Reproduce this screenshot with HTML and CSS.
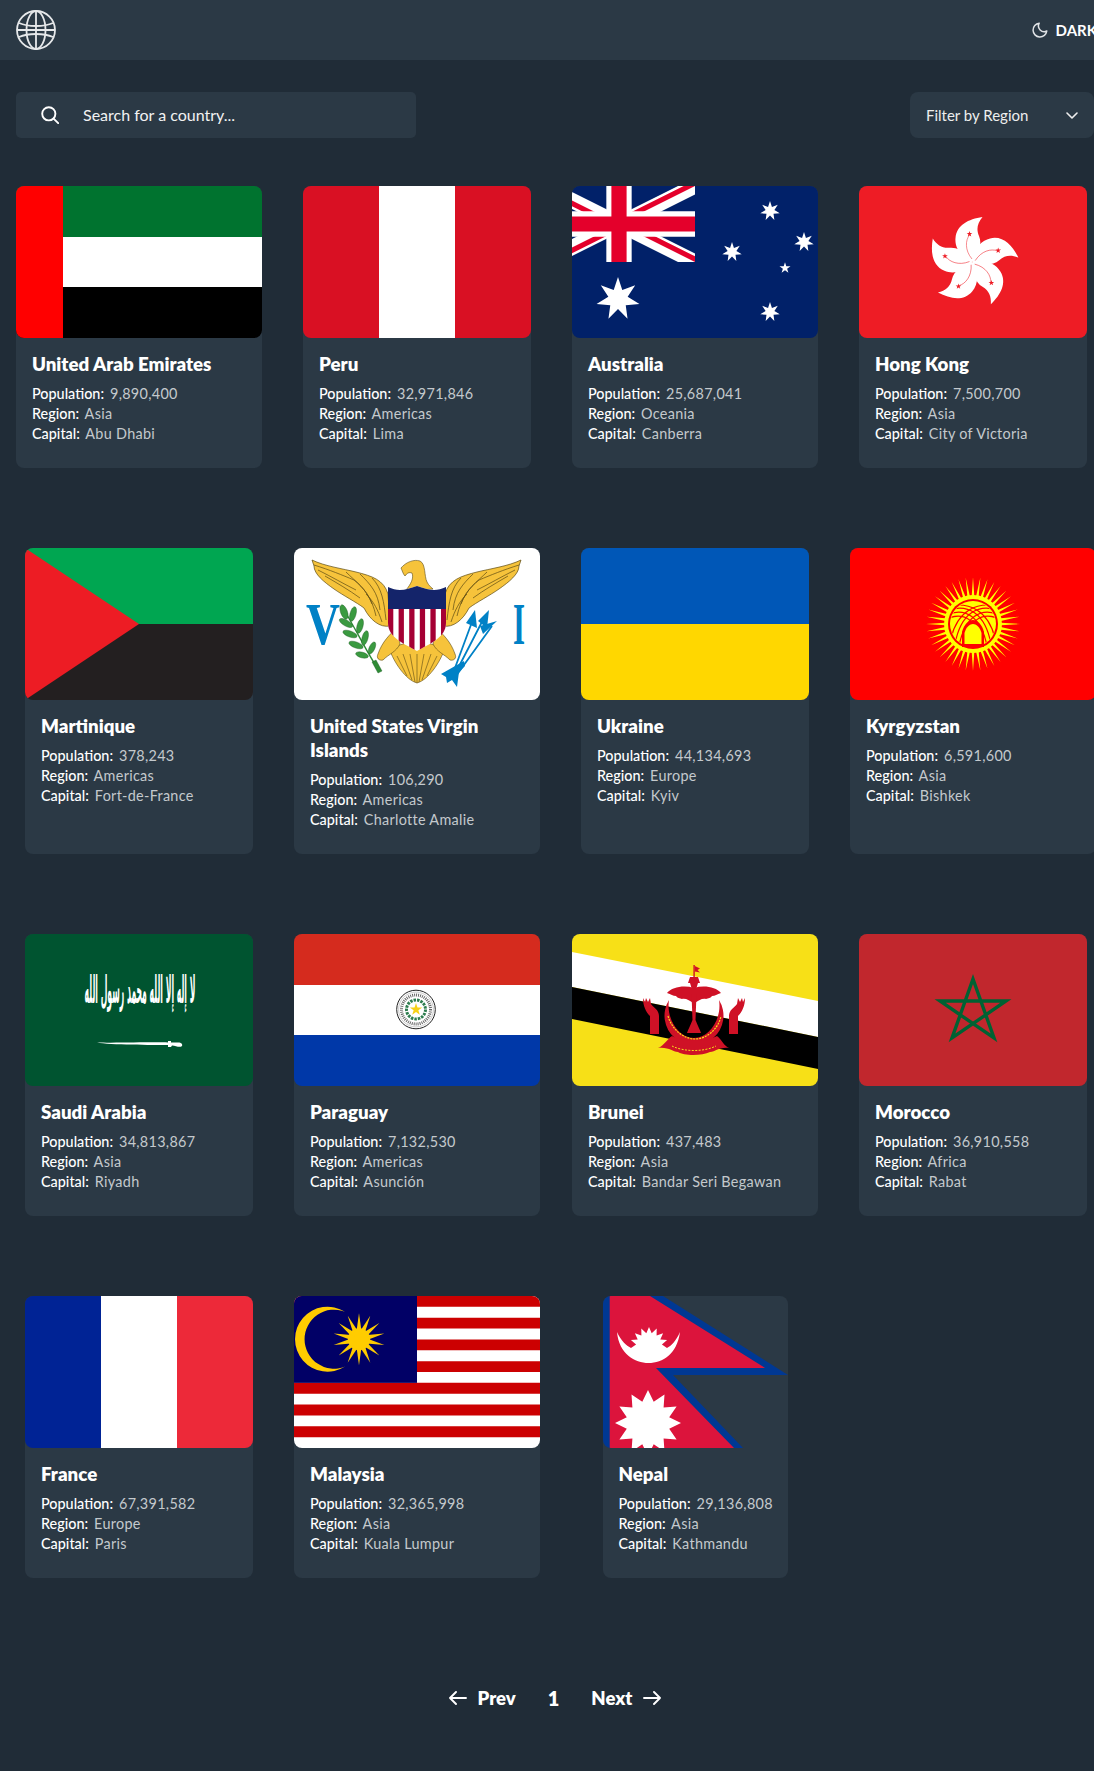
FILE: index.html
```html
<!DOCTYPE html>
<html lang="en">
<head>
<meta charset="utf-8">
<title>Where in the world?</title>
<link rel="stylesheet" href="styles.css">
</head>
<body>
<svg class="sprite" aria-hidden="true" viewBox="0 0 1 1">
  <defs>
    <polygon id="star5" points="0,-100 22.5,-31 95,-31 36.4,11.8 58.8,81 0,38 -58.8,81 -36.4,11.8 -95,-31 -22.5,-31"/>
    <polygon id="star7" points="0,-100 19.5,-40.5 78.2,-62.3 43.9,-10 97.5,22.3 35.2,28.1 43.4,90.1 0,45 -43.4,90.1 -35.2,28.1 -97.5,22.3 -43.9,-10 -78.2,-62.3 -19.5,-40.5"/>
  </defs>
</svg>

<header class="topbar">
  <svg class="logo" viewBox="0 0 40 40" fill="none" stroke="currentColor" stroke-width="1.8" aria-label="Globe">
    <circle cx="20" cy="20" r="19"/>
    <ellipse cx="20" cy="20" rx="9.5" ry="19"/>
    <path d="M3 13C12 17 28 17 37 13M3 27C12 23 28 23 37 27"/>
    <path d="M20 1v38M1 20h38"/>
  </svg>
  <button class="mode-toggle" type="button">
    <svg class="moon" viewBox="0 0 16 16" fill="none" stroke="currentColor" stroke-width="1.5" stroke-linejoin="round"><path d="M7.2 1.2A6.9 6.9 0 1 0 14.8 9 5.7 5.7 0 0 1 7.2 1.2Z"/></svg>
    <span>DARK</span>
  </button>
</header>

<main class="content">
  <section class="controls">
    <label class="search">
      <svg class="search-icon" viewBox="0 0 18 18" fill="none" stroke="currentColor" stroke-width="1.9" stroke-linecap="round"><circle cx="7.8" cy="7.8" r="6.6"/><path d="m12.6 12.6 4.6 4.6"/></svg>
      <span class="search-text">Search for a country...</span>
    </label>
    <div class="filter">
      <span class="filter-text">Filter by Region</span>
      <svg class="chevron" viewBox="0 0 12 7" fill="none" stroke="currentColor" stroke-width="1.6" stroke-linecap="round" stroke-linejoin="round"><path d="m1 1 5 5 5-5"/></svg>
    </div>
  </section>

  <section class="grid">

    <article class="card">
      <svg class="flag" viewBox="0 0 246 152" preserveAspectRatio="none" role="img" aria-label="Flag of United Arab Emirates">
        <rect width="246" height="51" fill="#00732f"/><rect y="51" width="246" height="50" fill="#fff"/><rect y="101" width="246" height="51" fill="#000"/><rect width="47" height="152" fill="#f00"/>
      </svg>
      <div class="card-body">
        <h2 class="name">United Arab Emirates</h2>
        <p class="fact"><b>Population:</b> 9,890,400</p>
        <p class="fact"><b>Region:</b> Asia</p>
        <p class="fact"><b>Capital:</b> Abu Dhabi</p>
      </div>
    </article>

    <article class="card card-narrow">
      <svg class="flag" viewBox="0 0 228 152" preserveAspectRatio="none" role="img" aria-label="Flag of Peru">
        <rect width="228" height="152" fill="#d91023"/><rect x="76" width="76" height="152" fill="#fff"/>
      </svg>
      <div class="card-body">
        <h2 class="name">Peru</h2>
        <p class="fact"><b>Population:</b> 32,971,846</p>
        <p class="fact"><b>Region:</b> Americas</p>
        <p class="fact"><b>Capital:</b> Lima</p>
      </div>
    </article>

    <article class="card">
      <svg class="flag" viewBox="0 0 246 152" preserveAspectRatio="none" role="img" aria-label="Flag of Australia">
        <rect width="246" height="152" fill="#012169"/>
        <svg x="-29" y="0" width="152" height="76" viewBox="0 0 60 30" preserveAspectRatio="none">
          <clipPath id="uj"><path d="M30 15h30v15zv15H0zH0V0zV0h30z"/></clipPath>
          <path d="M0 0l60 30M60 0L0 30" stroke="#fff" stroke-width="6"/>
          <path d="M0 0l60 30M60 0L0 30" stroke="#e4002b" stroke-width="4" clip-path="url(#uj)"/>
          <path d="M30 0v30M0 15h60" stroke="#fff" stroke-width="10"/>
          <path d="M30 0v30M0 15h60" stroke="#e4002b" stroke-width="6"/>
        </svg>
        <g fill="#fff">
          <use href="#star7" transform="translate(46 113) scale(.22)"/>
          <use href="#star7" transform="translate(198 25) scale(.1)"/>
          <use href="#star7" transform="translate(160 66) scale(.1)"/>
          <use href="#star7" transform="translate(232 56) scale(.1)"/>
          <use href="#star5" transform="translate(213 82) scale(.058)"/>
          <use href="#star7" transform="translate(198 126) scale(.1)"/>
        </g>
      </svg>
      <div class="card-body">
        <h2 class="name">Australia</h2>
        <p class="fact"><b>Population:</b> 25,687,041</p>
        <p class="fact"><b>Region:</b> Oceania</p>
        <p class="fact"><b>Capital:</b> Canberra</p>
      </div>
    </article>

    <article class="card card-narrow">
      <svg class="flag" viewBox="0 0 228 152" preserveAspectRatio="none" role="img" aria-label="Flag of Hong Kong">
        <rect width="228" height="152" fill="#ee1c25"/>
        <defs>
          <g id="petal">
            <path d="M0 0C-11-4-18-14-17-24-16-37-4-43 10-45 5-39 3.5-33 6.5-26 10-18 6-8 0 0Z" fill="#fff"/>
            <path d="M-.5-3C-8-12-7-22-3-27" fill="none" stroke="#ee1c25" stroke-width=".5"/>
            <use href="#star5" transform="translate(-3 -28) scale(.03)" fill="#ee1c25"/>
          </g>
        </defs>
        <g transform="translate(113.5 76)">
          <use href="#petal"/>
          <use href="#petal" transform="rotate(72)"/>
          <use href="#petal" transform="rotate(144)"/>
          <use href="#petal" transform="rotate(216)"/>
          <use href="#petal" transform="rotate(288)"/>
        </g>
      </svg>
      <div class="card-body">
        <h2 class="name">Hong Kong</h2>
        <p class="fact"><b>Population:</b> 7,500,700</p>
        <p class="fact"><b>Region:</b> Asia</p>
        <p class="fact"><b>Capital:</b> City of Victoria</p>
      </div>
    </article>

    <article class="card card-narrow">
      <svg class="flag" viewBox="0 0 228 152" preserveAspectRatio="none" role="img" aria-label="Flag of Martinique">
        <rect width="228" height="76" fill="#00a651"/><rect y="76" width="228" height="76" fill="#231f20"/><path d="M0 0 114 76 0 152Z" fill="#ed1c24"/>
      </svg>
      <div class="card-body">
        <h2 class="name">Martinique</h2>
        <p class="fact"><b>Population:</b> 378,243</p>
        <p class="fact"><b>Region:</b> Americas</p>
        <p class="fact"><b>Capital:</b> Fort-de-France</p>
      </div>
    </article>

    <article class="card">
      <svg class="flag" viewBox="0 0 246 152" preserveAspectRatio="none" role="img" aria-label="Flag of United States Virgin Islands">
        <rect width="246" height="152" fill="#fff"/>
        <text x="12" y="96" class="vi-letter" textLength="34" lengthAdjust="spacingAndGlyphs">V</text>
        <text x="219" y="96" class="vi-letter" textLength="12" lengthAdjust="spacingAndGlyphs">I</text>
        <defs>
          <g id="vi-wing">
            <path d="M18 12C30 18 50 21 62 24 78 28 90 32 94 46L96 78C86 80 76 72 70 60 62 54 50 48 40 41 30 34 20 26 20 18Z" fill="#f6c33b" stroke="#5c4a14" stroke-width=".7"/>
            <path d="M20 17C36 22 48 27 60 32M24 22C38 29 50 36 62 42M31 28C43 35 55 42 66 50M52 24C62 34 72 40 78 56M66 26C76 36 84 44 86 62M78 30C88 40 90 54 92 72M60 32C70 40 78 50 82 68M72 46C80 54 84 62 88 74" fill="none" stroke="#5c4a14" stroke-width=".7"/>
          </g>
          <g id="vi-leg">
            <path d="M103 80C96 86 88 94 84 106 82 110 85 113 89 112 95 106 102 104 106 96Z" fill="#f6c33b" stroke="#5c4a14" stroke-width=".6"/>
          </g>
        </defs>
        <use href="#vi-wing"/>
        <use href="#vi-wing" transform="translate(245 0) scale(-1 1)"/>
        <g class="vi-branch">
          <path d="M85 124 79 113C72 102 62 82 49 60" fill="none" stroke="#2e8b35" stroke-width="1.4"/>
          <path d="M84 125 78 114 82 112 88 123Z" fill="#2e8b35" stroke="#1d5c23" stroke-width=".4"/>
          <g fill="#3a9a40" stroke="#1d5c23" stroke-width=".4">
            <ellipse cx="50" cy="64" rx="3.4" ry="7.5" transform="rotate(-20 50 64)"/>
            <ellipse cx="59" cy="66" rx="3" ry="7.5" transform="rotate(15 59 66)"/>
            <ellipse cx="52" cy="75" rx="3" ry="7.5" transform="rotate(-60 52 75)"/>
            <ellipse cx="66" cy="78" rx="3" ry="7.5" transform="rotate(15 66 78)"/>
            <ellipse cx="56" cy="86" rx="3" ry="7.5" transform="rotate(-70 56 86)"/>
            <ellipse cx="71" cy="90" rx="3" ry="7.5" transform="rotate(15 71 90)"/>
            <ellipse cx="62" cy="97" rx="3" ry="7.5" transform="rotate(-70 62 97)"/>
            <ellipse cx="78" cy="100" rx="2.8" ry="6.5" transform="rotate(25 78 100)"/>
            <ellipse cx="68" cy="107" rx="2.8" ry="6.5" transform="rotate(-75 68 107)"/>
          </g>
        </g>
        <g class="vi-arrows">
          <path d="M158 128 178 74M160 128 191 68M162 128 198 78" fill="none" stroke="#0081c6" stroke-width="1.8"/>
          <g fill="#0081c6">
            <path d="M181 62 183 80 172 75Z"/><path d="M195 62 193 80 184 73Z"/><path d="M203 73 189 86 186 78Z"/>
            <path d="M147 126 170 113 171 118 165 124 163 139 158 132 153 135 152 129Z"/>
          </g>
        </g>
        <path d="M95 100C100 115 112 132 123 135 134 132 146 115 151 100L123 92Z" fill="#f6c33b" stroke="#5c4a14" stroke-width=".6"/>
        <path d="M103 108 113 128M109 106 118 132M116 106 121 134M123 106V135M130 106 125 134M137 106 128 132M143 108 133 128" fill="none" stroke="#5c4a14" stroke-width=".6"/>
        <use href="#vi-leg"/>
        <use href="#vi-leg" transform="translate(245 0) scale(-1 1)"/>
        <path d="M107 20C112 14 120 11 126 13 132 16 130 28 133 34 135 38 138 40 139 41 130 42 122 42 112 42 117 36 120 30 118 25 115 24 113 25 111 28 109 26 108 22 107 20Z" fill="#f6c33b" stroke="#5c4a14" stroke-width=".6"/>
        <clipPath id="vi-shield"><path d="M94 39C104 44 112 42 123 38 134 42 142 44 152 39V75C152 90 135 96 123 103 111 96 94 90 94 75Z"/></clipPath>
        <g clip-path="url(#vi-shield)">
          <rect x="94" y="36" width="58" height="68" fill="#fff"/>
          <path d="M94 83H152" stroke="#a50034" stroke-width="44" stroke-dasharray="5.3 5.3"/>
          <rect x="94" y="36" width="58" height="25" fill="#14246a"/>
        </g>
      </svg>
      <div class="card-body">
        <h2 class="name">United States Virgin Islands</h2>
        <p class="fact"><b>Population:</b> 106,290</p>
        <p class="fact"><b>Region:</b> Americas</p>
        <p class="fact"><b>Capital:</b> Charlotte Amalie</p>
      </div>
    </article>

    <article class="card card-narrow">
      <svg class="flag" viewBox="0 0 228 152" preserveAspectRatio="none" role="img" aria-label="Flag of Ukraine">
        <rect width="228" height="76" fill="#0057b7"/><rect y="76" width="228" height="76" fill="#ffd700"/>
      </svg>
      <div class="card-body">
        <h2 class="name">Ukraine</h2>
        <p class="fact"><b>Population:</b> 44,134,693</p>
        <p class="fact"><b>Region:</b> Europe</p>
        <p class="fact"><b>Capital:</b> Kyiv</p>
      </div>
    </article>

    <article class="card">
      <svg class="flag" viewBox="0 0 246 152" preserveAspectRatio="none" role="img" aria-label="Flag of Kyrgyzstan">
        <rect width="246" height="152" fill="#f00"/>
        <defs>
          <path id="kg-ray" d="M-1.3-28 0-47 1.3-28ZM-1.3 28 0 47 1.3 28Z" fill="#ff0"/>
          <clipPath id="kg-disc"><circle r="22.5"/></clipPath>
        </defs>
        <g transform="translate(123 76)">
          <use href="#kg-ray"/><use href="#kg-ray" transform="rotate(9)"/><use href="#kg-ray" transform="rotate(18)"/><use href="#kg-ray" transform="rotate(27)"/><use href="#kg-ray" transform="rotate(36)"/>
          <use href="#kg-ray" transform="rotate(45)"/><use href="#kg-ray" transform="rotate(54)"/><use href="#kg-ray" transform="rotate(63)"/><use href="#kg-ray" transform="rotate(72)"/><use href="#kg-ray" transform="rotate(81)"/>
          <use href="#kg-ray" transform="rotate(90)"/><use href="#kg-ray" transform="rotate(99)"/><use href="#kg-ray" transform="rotate(108)"/><use href="#kg-ray" transform="rotate(117)"/><use href="#kg-ray" transform="rotate(126)"/>
          <use href="#kg-ray" transform="rotate(135)"/><use href="#kg-ray" transform="rotate(144)"/><use href="#kg-ray" transform="rotate(153)"/><use href="#kg-ray" transform="rotate(162)"/><use href="#kg-ray" transform="rotate(171)"/>
          <circle r="29" fill="#ff0"/>
          <circle r="25" fill="#f00"/>
          <circle r="23" fill="#ff0"/>
          <g clip-path="url(#kg-disc)" fill="none" stroke="#f00" stroke-width="1.2">
            <path d="M-24-10C-8-16 8-8 14 22M-24-6C-8-12 5-3 10 22M-24-14C-6-20 12-12 18 20M-24-18C-4-22 15-14 22 14"/>
            <path d="M24-10C8-16-8-8-14 22M24-6C8-12-5-3-10 22M24-14C6-20-12-12-18 20M24-18C4-22-15-14-22 14"/>
          </g>
          <path d="M-11 23V8C-9 0-4-4 0-4 4-4 9 0 11 8V23Z" fill="#f00"/>
          <path d="M-8.5 20V9C-7 3-3 0 0 0 3 0 7 3 8.5 9V20Z" fill="#ff0"/>
        </g>
      </svg>
      <div class="card-body">
        <h2 class="name">Kyrgyzstan</h2>
        <p class="fact"><b>Population:</b> 6,591,600</p>
        <p class="fact"><b>Region:</b> Asia</p>
        <p class="fact"><b>Capital:</b> Bishkek</p>
      </div>
    </article>

    <article class="card card-narrow">
      <svg class="flag" viewBox="0 0 228 152" preserveAspectRatio="none" role="img" aria-label="Flag of Saudi Arabia">
        <rect width="228" height="152" fill="#005430"/>
        <text class="sa-script" text-anchor="middle" transform="translate(115 69) scale(.386 1.9)">لا إله إلا الله محمد رسول الله</text>
        <path d="M72 108.5C90 109 128 108 143 108.5L143 107 146 107 146 108.5 152 108.5C156 108 158 110 157 112 155 114 151 112 147 111.5L146 113 143 113 143 111C128 111 85 111 72 108.5Z" fill="#fff"/>
      </svg>
      <div class="card-body">
        <h2 class="name">Saudi Arabia</h2>
        <p class="fact"><b>Population:</b> 34,813,867</p>
        <p class="fact"><b>Region:</b> Asia</p>
        <p class="fact"><b>Capital:</b> Riyadh</p>
      </div>
    </article>

    <article class="card">
      <svg class="flag" viewBox="0 0 246 152" preserveAspectRatio="none" role="img" aria-label="Flag of Paraguay">
        <rect width="246" height="51" fill="#d52b1e"/><rect y="51" width="246" height="50" fill="#fff"/><rect y="101" width="246" height="51" fill="#0038a8"/>
        <g transform="translate(122 75.5)">
          <circle r="19.3" fill="#fff" stroke="#222" stroke-width="1"/>
          <circle r="17.4" fill="none" stroke="#999" stroke-width=".5"/>
          <circle r="14.5" fill="none" stroke="#666" stroke-width="3" stroke-dasharray="1 1"/>
          <circle r="9.5" fill="none" stroke="#2e7d4f" stroke-width="3" stroke-dasharray="2.5 1"/>
          <use href="#star5" transform="scale(.065)" fill="#f7d117"/>
        </g>
      </svg>
      <div class="card-body">
        <h2 class="name">Paraguay</h2>
        <p class="fact"><b>Population:</b> 7,132,530</p>
        <p class="fact"><b>Region:</b> Americas</p>
        <p class="fact"><b>Capital:</b> Asunción</p>
      </div>
    </article>

    <article class="card">
      <svg class="flag" viewBox="0 0 246 152" preserveAspectRatio="none" role="img" aria-label="Flag of Brunei">
        <rect width="246" height="152" fill="#f7e017"/>
        <path d="M0 18 246 67V103L0 53Z" fill="#fff"/>
        <path d="M0 53 246 103V135L0 85Z" fill="#000"/>
        <defs>
          <g id="bn-side">
            <path d="M122 54C112 51 100 53 95 59 99 60 101 62 104 62 105 64 108 64 110 65 113 64 118 66 122 70Z"/>
            <path d="M71 64C71 72 74 78 78 82V100H87V82C87 76 82 74 79 70L78 64 76 68 74 64 73 68Z"/>
          </g>
        </defs>
        <g fill="#cf1126">
          <use href="#bn-side"/>
          <use href="#bn-side" transform="translate(244 0) scale(-1 1)"/>
          <rect x="121.4" y="31" width="1.4" height="15"/>
          <path d="M122.8 32 128 34.5 125.5 36 128 38.5 122.8 37.5Z"/>
          <path d="M116 49 118 43H126L128 49Z"/>
          <path d="M118 49H126L124.5 54H119.5Z"/>
          <path d="M119.5 60H124.5L123.5 86C126 92 128 96 129 99H115C116 96 118 92 120.5 86Z"/>
          <path d="M97 66A29.5 29.5 0 1 0 147 66C150 84 138 104 122 104 106 104 94 84 97 66Z"/>
          <path d="M86 114C92 112 96 104 100 102 110 108 134 108 145 102 150 106 152 112 157 114 146 113 144 118 138 118 130 122 112 122 106 118 100 118 98 113 86 114Z"/>
        </g>
        <path d="M96 82C100 96 112 105 123 105 134 105 146 96 149 82" fill="none" stroke="#f7e017" stroke-width="1.2" stroke-dasharray="2 1"/>
        <path d="M100 112C112 118 132 118 144 112" fill="none" stroke="#f7e017" stroke-width="1" stroke-dasharray="2 1.4"/>
      </svg>
      <div class="card-body">
        <h2 class="name">Brunei</h2>
        <p class="fact"><b>Population:</b> 437,483</p>
        <p class="fact"><b>Region:</b> Asia</p>
        <p class="fact"><b>Capital:</b> Bandar Seri Begawan</p>
      </div>
    </article>

    <article class="card card-narrow">
      <svg class="flag" viewBox="0 0 228 152" preserveAspectRatio="none" role="img" aria-label="Flag of Morocco">
        <rect width="228" height="152" fill="#c1272d"/>
        <path d="M114 45 135 104 81 67H147L93 104Z" fill="none" stroke="#006233" stroke-width="3.4"/>
      </svg>
      <div class="card-body">
        <h2 class="name">Morocco</h2>
        <p class="fact"><b>Population:</b> 36,910,558</p>
        <p class="fact"><b>Region:</b> Africa</p>
        <p class="fact"><b>Capital:</b> Rabat</p>
      </div>
    </article>

    <article class="card card-narrow">
      <svg class="flag" viewBox="0 0 228 152" preserveAspectRatio="none" role="img" aria-label="Flag of France">
        <rect width="76" height="152" fill="#002395"/><rect x="76" width="76" height="152" fill="#fff"/><rect x="152" width="76" height="152" fill="#ed2939"/>
      </svg>
      <div class="card-body">
        <h2 class="name">France</h2>
        <p class="fact"><b>Population:</b> 67,391,582</p>
        <p class="fact"><b>Region:</b> Europe</p>
        <p class="fact"><b>Capital:</b> Paris</p>
      </div>
    </article>

    <article class="card">
      <svg class="flag" viewBox="0 0 246 152" preserveAspectRatio="none" role="img" aria-label="Flag of Malaysia">
        <rect width="246" height="152" fill="#fff"/>
        <path d="M0 5.43H246M0 27.14H246M0 48.86H246M0 70.57H246M0 92.29H246M0 114H246M0 135.71H246" stroke="#cc0001" stroke-width="10.86"/>
        <rect width="123" height="86.86" fill="#010066"/>
        <path d="M51 15.8A32.5 32.5 0 1 0 51 70.6 29.5 29.5 0 1 1 51 15.8Z" fill="#fc0"/>
        <g transform="translate(65 43.2)" fill="#fc0">
          <circle r="11"/>
          <path id="my-ray" d="M0-26 3.6 0 0 26-3.6 0Z"/>
          <use href="#my-ray" transform="rotate(25.71)"/><use href="#my-ray" transform="rotate(51.43)"/><use href="#my-ray" transform="rotate(77.14)"/><use href="#my-ray" transform="rotate(102.86)"/><use href="#my-ray" transform="rotate(128.57)"/><use href="#my-ray" transform="rotate(154.29)"/>
        </g>
      </svg>
      <div class="card-body">
        <h2 class="name">Malaysia</h2>
        <p class="fact"><b>Population:</b> 32,365,998</p>
        <p class="fact"><b>Region:</b> Asia</p>
        <p class="fact"><b>Capital:</b> Kuala Lumpur</p>
      </div>
    </article>

    <article class="card card-nepal">
      <svg class="flag" viewBox="0 0 185 152" preserveAspectRatio="none" role="img" aria-label="Flag of Nepal">
        <path d="M0 0H60L185 79H70L140 152H0Z" fill="#003893"/>
        <path d="M6.7 0H47L162 72H53L131 152H6.7Z" fill="#dc143c"/>
        <path d="M14 36C16 58 32 67 45.5 67 60 67 74 58 77 36 73 45 68 50 64 52L58.9 48.6 64.1 44.1 57.3 43.5 60.1 37.3 53.6 39.5 53.7 32.6 48.7 37.3 46 31 43.3 37.3 38.3 32.6 38.4 39.5 31.9 37.3 34.7 43.5 27.9 44.1 33.1 48.6 28 52C24 50 18 45 14 36Z" fill="#fff"/>
        <polygon points="45,94 50.7,105.8 61.5,98.4 60.6,111.4 73.6,110.5 66.2,121.3 78,127 66.2,132.7 73.6,143.5 60.6,142.6 61.5,155.6 50.7,148.2 45,160 39.3,148.2 28.5,155.6 29.4,142.6 16.4,143.5 23.8,132.7 12,127 23.8,121.3 16.4,110.5 29.4,111.4 28.5,98.4 39.3,105.8" fill="#fff"/>
      </svg>
      <div class="card-body">
        <h2 class="name">Nepal</h2>
        <p class="fact"><b>Population:</b> 29,136,808</p>
        <p class="fact"><b>Region:</b> Asia</p>
        <p class="fact"><b>Capital:</b> Kathmandu</p>
      </div>
    </article>

  </section>

  <nav class="pager">
    <a class="pager-link">
      <svg class="arrow" viewBox="0 0 18 14" fill="none" stroke="currentColor" stroke-width="1.9" stroke-linecap="round" stroke-linejoin="round"><path d="M17 7H1M7 1 1 7l6 6"/></svg>
      <span>Prev</span>
    </a>
    <span class="pager-num">1</span>
    <a class="pager-link">
      <span>Next</span>
      <svg class="arrow" viewBox="0 0 18 14" fill="none" stroke="currentColor" stroke-width="1.9" stroke-linecap="round" stroke-linejoin="round"><path d="M1 7h16M11 1l6 6-6 6"/></svg>
    </a>
  </nav>
</main>
</body>
</html>
```

FILE: styles.css
```css
* { box-sizing: border-box; }

html {
  margin: 0;
  padding: 0;
  overflow-x: hidden;
}

body {
  margin: 0;
  padding: 0;
  min-height: 1771px;
  overflow-x: clip;
  background: #202c37;
  color: #fff;
  font-family: "Lato", "Noto Sans", sans-serif;
}

.sprite {
  position: absolute;
  width: 0;
  height: 0;
}

/* top bar */
.topbar {
  display: flex;
  align-items: center;
  justify-content: space-between;
  height: 60px;
  padding-left: 16px;
  background: #2b3945;
}

.logo {
  width: 40px;
  height: 40px;
  color: #e6e8ea;
}

.mode-toggle {
  display: flex;
  align-items: center;
  gap: 8px;
  margin-right: -3px;
  padding: 0;
  border: 0;
  background: none;
  color: #fff;
  font: 700 15px "Lato", sans-serif;
}

.moon {
  width: 16px;
  height: 16px;
  color: #dfe2e5;
}

/* controls */
.content {
  padding: 32px 0 0 16px;
}

.controls {
  display: flex;
  justify-content: space-between;
  margin-bottom: 48px;
}

.search {
  display: flex;
  align-items: center;
  width: 400px;
  height: 46px;
  padding-left: 25px;
  border-radius: 5px;
  background: #2b3945;
}

.search-icon {
  width: 18px;
  height: 18px;
  margin-right: 24px;
}

.search-text {
  margin-top: -1px;
  font-size: 16px;
  font-weight: 400;
  color: #f2f2f2;
}

.filter {
  display: flex;
  align-items: center;
  justify-content: space-between;
  width: 184px;
  height: 46px;
  padding: 0 16px;
  border-radius: 8px;
  background: #2b3945;
  font-size: 15px;
  color: #eee;
}

.filter-text {
  margin-top: -1px;
}

.chevron {
  width: 12px;
  height: 7px;
}

/* cards */
.grid {
  display: grid;
  grid-template-columns: repeat(4, 246px);
  gap: 80px 32px;
  justify-items: center;
}

.card {
  width: 246px;
  border-radius: 8px;
  background: #2b3945;
}

.card-narrow { width: 228px; }
.card-nepal { width: 185px; }

.flag {
  display: block;
  width: 100%;
  height: 152px;
  border-radius: 8px;
}

.card-body {
  padding: 14px 16px 24px;
}

.name {
  margin: 0 0 8px;
  font-size: 18.7px;
  line-height: 24px;
  font-weight: 800;
}

.fact {
  margin: 0;
  font-size: 14.4px;
  line-height: 20px;
  font-weight: 400;
  letter-spacing: .3px;
  white-space: nowrap;
  color: #c4c9cd;
}

.fact b {
  margin-right: 2px;
  font-weight: 500;
  letter-spacing: 0;
  color: #fff;
}

.vi-letter {
  font-family: "Liberation Serif", serif;
  font-weight: 700;
  font-size: 60px;
  fill: #0081c6;
}

.sa-script {
  font-family: "DejaVu Sans", sans-serif;
  font-weight: 700;
  font-size: 20px;
  fill: #fff;
}

/* pagination */
.pager {
  display: flex;
  align-items: center;
  justify-content: center;
  gap: 32px;
  margin-top: 108px;
  height: 24px;
  font-size: 18.5px;
  font-weight: 800;
}

.pager-num {
  font-size: 20px;
}

.pager-link {
  display: flex;
  align-items: center;
  gap: 11px;
}

.arrow {
  width: 18px;
  height: 14px;
}
```
